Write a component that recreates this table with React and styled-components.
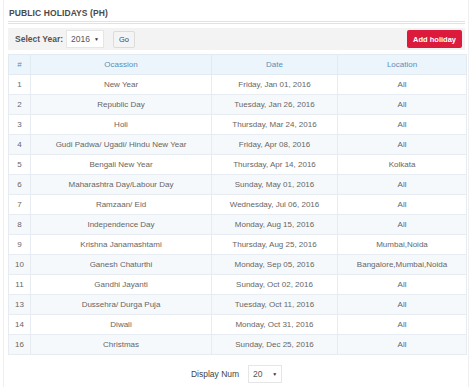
import React from "react";
import styled, { createGlobalStyle } from "styled-components";

const holidays = [
  ["1", "New Year", "Friday, Jan 01, 2016", "All"],
  ["2", "Republic Day", "Tuesday, Jan 26, 2016", "All"],
  ["3", "Holi", "Thursday, Mar 24, 2016", "All"],
  ["4", "Gudi Padwa/ Ugadi/ Hindu New Year", "Friday, Apr 08, 2016", "All"],
  ["5", "Bengali New Year", "Thursday, Apr 14, 2016", "Kolkata"],
  ["6", "Maharashtra Day/Labour Day", "Sunday, May 01, 2016", "All"],
  ["7", "Ramzaan/ Eid", "Wednesday, Jul 06, 2016", "All"],
  ["8", "Independence Day", "Monday, Aug 15, 2016", "All"],
  ["9", "Krishna Janamashtami", "Thursday, Aug 25, 2016", "Mumbai,Noida"],
  ["10", "Ganesh Chaturthi", "Monday, Sep 05, 2016", "Bangalore,Mumbai,Noida"],
  ["11", "Gandhi Jayanti", "Sunday, Oct 02, 2016", "All"],
  ["13", "Dussehra/ Durga Puja", "Tuesday, Oct 11, 2016", "All"],
  ["14", "Diwali", "Monday, Oct 31, 2016", "All"],
  ["16", "Christmas", "Sunday, Dec 25, 2016", "All"],
];

export default function App() {
  return (
    <>
      <GlobalStyle />
      <Panel>
        <Title>PUBLIC HOLIDAYS (PH)</Title>
        <Toolbar>
          <ToolGroup>
            <Label>Select Year:</Label>
            <Select width="38px">
              <span>2016</span>
              <Caret>▼</Caret>
            </Select>
            <GoButton>Go</GoButton>
          </ToolGroup>
          <AddButton>Add holiday</AddButton>
        </Toolbar>
        <Table>
          <colgroup>
            <col style={{ width: "22px" }} />
            <col style={{ width: "181px" }} />
            <col style={{ width: "126px" }} />
            <col />
          </colgroup>
          <thead>
            <tr>
              <Th>#</Th>
              <Th>Ocassion</Th>
              <Th>Date</Th>
              <Th>Location</Th>
            </tr>
          </thead>
          <tbody>
            {holidays.map((h, i) => (
              <Row key={h[0]} striped={i % 2 === 1}>
                <Td>{h[0]}</Td>
                <Td>{h[1]}</Td>
                <Td>{h[2]}</Td>
                <Td>{h[3]}</Td>
              </Row>
            ))}
          </tbody>
        </Table>
        <Footer>
          <FooterLabel>Display Num</FooterLabel>
          <Select width="34px">
            <span>20</span>
            <Caret>▼</Caret>
          </Select>
        </Footer>
      </Panel>
    </>
  );
}

const GlobalStyle = createGlobalStyle`
  body {
    margin: 0;
    background: #fff;
    font-family: "Liberation Sans", Arial, sans-serif;
  }
`;

const Panel = styled.div`
  width: 466px;
  height: 387px;
  box-sizing: border-box;
  margin-left: 3px;
  border-left: 1px solid #f0f0f0;
  border-right: 1px solid #f0f0f0;
  padding: 7px 3px 0 4px;
`;

const Title = styled.div`
  font-size: 8.5px;
  font-weight: bold;
  color: #4a4a4a;
  letter-spacing: 0.1px;
  padding: 1px 0 3px 1px;
  border-bottom: 3px double #e2e2e2;
`;

const Toolbar = styled.div`
  display: flex;
  justify-content: space-between;
  align-items: center;
  margin-top: 4px;
  height: 22px;
  padding: 0 3px 0 7px;
  background: #f3f3f3;
`;

const ToolGroup = styled.div`
  display: flex;
  align-items: center;
`;

const Label = styled.span`
  font-size: 8.5px;
  font-weight: bold;
  color: #555;
  margin-right: 3px;
`;

const Select = styled.div`
  display: flex;
  align-items: center;
  justify-content: space-between;
  box-sizing: border-box;
  width: ${(p) => p.width};
  height: 18px;
  padding: 0 4px;
  background: #fff;
  border: 1px solid #e6e6e6;
  font-size: 8.5px;
  color: #555;
`;

const Caret = styled.span`
  font-size: 5px;
  color: #333;
`;

const GoButton = styled.div`
  margin-left: 9px;
  width: 22px;
  height: 17px;
  box-sizing: border-box;
  display: flex;
  align-items: center;
  justify-content: center;
  background: #f4f4f4;
  border: 1px solid #dcdcdc;
  border-radius: 2px;
  font-size: 7.5px;
  color: #444;
`;

const AddButton = styled.div`
  height: 18px;
  padding: 0 6px;
  display: flex;
  align-items: center;
  background: #dc1b3c;
  border-radius: 2px;
  color: #fff;
  font-size: 7.5px;
  font-weight: bold;
`;

const Table = styled.table`
  width: 459px;
  margin-top: 4px;
  border-collapse: collapse;
  table-layout: fixed;
  font-size: 8px;
  color: #666;
`;

const Th = styled.th`
  height: 19px;
  padding: 0;
  font-weight: normal;
  color: #5c8db8;
  background: #edf5fc;
  border: 1px solid #e3ebf2;
  text-align: center;
`;

const Row = styled.tr`
  background: ${(p) => (p.striped ? "#f6f9fb" : "#ffffff")};
`;

const Td = styled.td`
  height: 19px;
  padding: 0;
  border: 1px solid #e6ecf1;
  text-align: center;
  white-space: nowrap;
`;

const Footer = styled.div`
  display: flex;
  align-items: center;
  justify-content: center;
  margin-top: 10px;
  gap: 9px;
`;

const FooterLabel = styled.span`
  font-size: 8.5px;
  color: #444;
`;
